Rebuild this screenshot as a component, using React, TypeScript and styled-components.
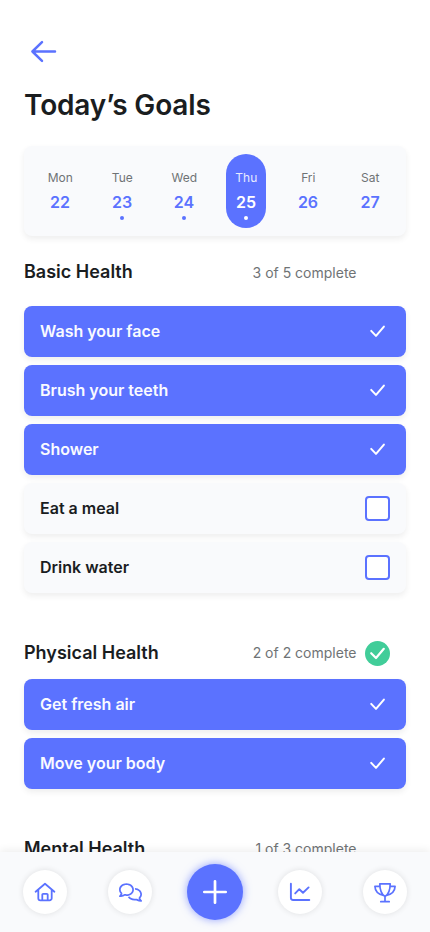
import React from "react";
import styled, { createGlobalStyle } from "styled-components";
import { FaRegComments } from "react-icons/fa6";

const color = {
  accent: "#5b72ff",
  surface: "#f9fafc",
  ink: "#1a1d1f",
  muted: "#6f7375",
  success: "#41cd99",
};

const GlobalStyle = createGlobalStyle`
  *, *::before, *::after { box-sizing: border-box; }
  html, body { margin: 0; background: #fff; overflow: hidden; }
  body { font-family: Inter, "Liberation Sans", sans-serif; color: ${color.ink}; }
  button { font: inherit; color: inherit; border: 0; padding: 0; background: none; }
  h1, h2, p { margin: 0; }
`;

const Screen = styled.div`
  display: flex;
  flex-direction: column;
  width: 430px;
  height: 932px;
  overflow: hidden;
  background: #fff;
`;

const Content = styled.main`
  flex: 1;
  min-height: 0;
  overflow: hidden;
  padding: 36px 24px 0;
`;

const BackButton = styled.button`
  display: flex;
  align-items: center;
  justify-content: center;
  width: 38px;
  height: 30px;
`;

const Title = styled.h1`
  margin-top: 21px;
  font-size: 28px;
  line-height: 36px;
  font-weight: 600;
  letter-spacing: -0.15px;
`;

const DayStrip = styled.div`
  display: flex;
  justify-content: space-between;
  margin-top: 23px;
  padding: 8px 16px;
  height: 90px;
  border-radius: 8px;
  background: ${color.surface};
  box-shadow: 0 3px 6px rgba(0, 0, 0, 0.07);
`;

const Day = styled.button<{ $active?: boolean }>`
  display: flex;
  flex-direction: column;
  align-items: center;
  width: 40px;
  height: 74px;
  padding-top: 16px;
  border-radius: 20px;
  background: ${(p) => (p.$active ? color.accent : "transparent")};
  color: ${(p) => (p.$active ? "#fff" : color.accent)};
`;

const DayName = styled.span<{ $active?: boolean }>`
  font-size: 12px;
  line-height: 16px;
  padding-left: 0.6px;
  color: ${(p) => (p.$active ? "#e8ebff" : color.muted)};
`;

const DayNumber = styled.span`
  margin-top: 6px;
  font-size: 16px;
  line-height: 20px;
  font-weight: 600;
`;

const Dot = styled.span`
  width: 4px;
  height: 4px;
  margin-top: 4px;
  border-radius: 50%;
  background: currentColor;
`;

const Section = styled.section<{ $top: number }>`
  margin-top: ${(p) => p.$top}px;
`;

const SectionHeader = styled.header<{ $gap: number }>`
  display: grid;
  grid-template-columns: 1fr auto 25px;
  column-gap: 8.5px;
  align-items: center;
  height: 26px;
  padding-right: 16px;
  margin-bottom: ${(p) => p.$gap}px;
`;

const SectionTitle = styled.h2`
  font-size: 18px;
  line-height: 26px;
  font-weight: 600;
`;

const Progress = styled.p<{ $drop?: number }>`
  padding-top: ${(p) => p.$drop ?? 0}px;
  font-size: 14px;
  line-height: 24px;
  color: ${color.muted};
`;

const DoneBadge = styled.span`
  display: flex;
  width: 25px;
  height: 25px;
  border-radius: 50%;
  background: ${color.success};
`;

const GoalList = styled.div`
  display: flex;
  flex-direction: column;
  gap: 8px;
`;

const Goal = styled.div<{ $done: boolean }>`
  display: flex;
  align-items: center;
  justify-content: space-between;
  height: 51px;
  padding: 0 16px;
  border-radius: 8px;
  background: ${(p) => (p.$done ? color.accent : color.surface)};
  color: ${(p) => (p.$done ? "#f9faff" : color.ink)};
  box-shadow: 0 3px 6px rgba(0, 0, 0, 0.07);
`;

const GoalLabel = styled.span`
  padding-bottom: 2px;
  font-size: 16px;
  line-height: 24px;
  font-weight: 600;
`;

const Checkbox = styled.span`
  width: 25px;
  height: 25px;
  border: 2px solid ${color.accent};
  border-radius: 4px;
  background: #fff;
`;

const NavBar = styled.nav`
  position: relative;
  flex: none;
  display: grid;
  grid-template-columns: repeat(5, 85px);
  justify-content: center;
  align-items: center;
  justify-items: center;
  height: 80px;
  background: ${color.surface};
  box-shadow: 0 -2px 8px rgba(0, 0, 0, 0.07);
`;

const NavButton = styled.button`
  display: flex;
  align-items: center;
  justify-content: center;
  width: 44px;
  height: 44px;
  border-radius: 50%;
  background: #fff;
  color: ${color.accent};
  box-shadow: 0 0 6px rgba(0, 0, 0, 0.11);
`;

const AddButton = styled(NavButton)`
  width: 56px;
  height: 56px;
  background: ${color.accent};
  color: #fff;
  box-shadow: 0 0 8px rgba(91, 114, 255, 0.65);
`;

const Stroke = styled.svg<{ $w?: number }>`
  display: block;
  fill: none;
  stroke: currentColor;
  stroke-width: ${(p) => p.$w ?? 1.8};
  stroke-linecap: round;
  stroke-linejoin: round;
`;

const BackArrow = styled(Stroke)`
  color: ${color.accent};
`;

const CheckMark = ({ large = false }: { large?: boolean }) => (
  <Stroke width="25" height="25" viewBox="0 0 25 25" $w={large ? 2.2 : 2} color="#fff">
    <path d={large ? "M6.2 12.2 11 17 18.8 7.8" : "M6.2 11.9 11 16.9 18.9 7.6"} />
  </Stroke>
);

const days = [
  { name: "Mon", date: 22 },
  { name: "Tue", date: 23, dot: true },
  { name: "Wed", date: 24, dot: true },
  { name: "Thu", date: 25, dot: true, active: true },
  { name: "Fri", date: 26 },
  { name: "Sat", date: 27 },
];

interface SectionData {
  title: string;
  progress: string;
  complete?: boolean;
  top: number;
  gap: number;
  drop?: number;
  goals: [string, boolean][];
}

const sections: SectionData[] = [
  {
    title: "Basic Health",
    progress: "3 of 5 complete",
    top: 23,
    gap: 21,
    drop: 2,
    goals: [
      ["Wash your face", true],
      ["Brush your teeth", true],
      ["Shower", true],
      ["Eat a meal", false],
      ["Drink water", false],
    ],
  },
  {
    title: "Physical Health",
    progress: "2 of 2 complete",
    complete: true,
    top: 47,
    gap: 13,
    goals: [
      ["Get fresh air", true],
      ["Move your body", true],
    ],
  },
  { title: "Mental Health", progress: "1 of 3 complete", top: 47, gap: 13, goals: [] },
];

export default function App() {
  return (
    <>
      <GlobalStyle />
      <Screen>
        <Content>
          <BackButton aria-label="Back">
            <BackArrow width="28" height="24" viewBox="0 0 28 24" $w={2.5}>
              <path d="M26 12.500H3.400M13 3.200 3.400 12.500l9.600 9.300" />
            </BackArrow>
          </BackButton>
          <Title>Today’s Goals</Title>
          <DayStrip>
            {days.map((d) => (
              <Day key={d.name} $active={d.active}>
                <DayName $active={d.active}>{d.name}</DayName>
                <DayNumber>{d.date}</DayNumber>
                {d.dot && <Dot />}
              </Day>
            ))}
          </DayStrip>
          {sections.map((s) => (
            <Section key={s.title} $top={s.top}>
              <SectionHeader $gap={s.gap}>
                <SectionTitle>{s.title}</SectionTitle>
                <Progress $drop={s.drop}>{s.progress}</Progress>
                {s.complete && (
                  <DoneBadge>
                    <CheckMark large />
                  </DoneBadge>
                )}
              </SectionHeader>
              <GoalList>
                {s.goals.map(([label, done]) => (
                  <Goal key={label} $done={done}>
                    <GoalLabel>{label}</GoalLabel>
                    {done ? <CheckMark /> : <Checkbox />}
                  </Goal>
                ))}
              </GoalList>
            </Section>
          ))}
        </Content>
        <NavBar>
          <NavButton aria-label="Home">
            <Stroke width="22" height="20" viewBox="0 0 22 20">
              <path d="M1.600 9.700 11 1.800l9.400 7.900M4.300 7.600v8.600a2.100 2.100 0 0 0 2.100 2.100h9.200a2.100 2.100 0 0 0 2.100-2.100V7.600M8.300 18.200v-5.500a.9.9 0 0 1 .9-.9h3.600a.9.9 0 0 1 .9.9v5.500" />
            </Stroke>
          </NavButton>
          <NavButton aria-label="Messages">
            <FaRegComments size={23} />
          </NavButton>
          <AddButton aria-label="Add goal">
            <Stroke width="26" height="26" viewBox="0 0 26 26" $w={2.7}>
              <path d="M13 2.300v21.400M2.300 13h21.400" />
            </Stroke>
          </AddButton>
          <NavButton aria-label="Statistics">
            <Stroke width="22" height="20" viewBox="0 0 22 20" $w={1.9}>
              <path d="M1.900 1.700v14.100a2.200 2.200 0 0 0 2.200 2.200h16.200M6.200 11.400l4.100-4.200 3.700 3.500 5.600-5.300" />
            </Stroke>
          </NavButton>
          <NavButton aria-label="Achievements">
            <Stroke width="24" height="22" viewBox="0 0 24 22" $w={1.7}>
              <path d="M6.800 2.800h10.400c0 6-1.500 10.500-5.200 12.700C8.300 13.300 6.800 8.800 6.800 2.800ZM12 15.500v5M7.800 20.700h8.400M6.800 5.300H1.900c.2 4.400 2.800 7.700 8 9M17.200 5.300h4.900c-.2 4.400-2.800 7.700-8 9" />
            </Stroke>
          </NavButton>
        </NavBar>
      </Screen>
    </>
  );
}
